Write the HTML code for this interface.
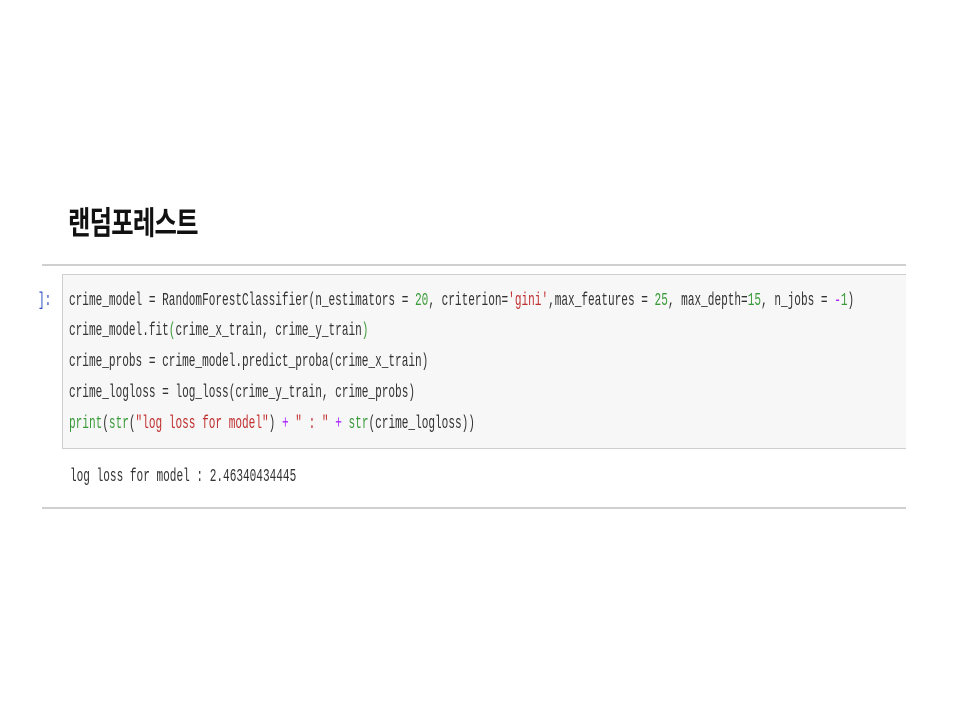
<!DOCTYPE html>
<html><head><meta charset="utf-8"><style>
body{margin:0;width:960px;height:720px;background:#fff;position:relative;overflow:hidden}
.t{position:absolute;left:68px;top:198px;font:bold 32px "Liberation Sans","Noto Sans CJK KR",sans-serif;color:#111;letter-spacing:-1px;transform:scaleX(0.76);transform-origin:0 50%}
.rule{position:absolute;left:42px;width:864px;height:2px;background:#d0d0d0}
.box{position:absolute;left:62px;top:274px;width:843px;height:173px;background:#f7f7f7;border:1px solid #cfcfcf;border-right:none}
.l{position:absolute;left:69px;font:18px "Liberation Mono",monospace;color:#333;white-space:pre;transform:scaleX(0.616);transform-origin:0 50%;line-height:20px}
.g{color:#3a9a3a}.r{color:#c03030}.p{color:#aa22ff}
.pr{position:absolute;left:38px;top:291px;font:18px "Liberation Mono",monospace;color:#3050c0;transform:scaleX(0.616);transform-origin:0 50%}
</style></head><body>
<div class="t">랜덤포레스트</div>
<div class="rule" style="top:264px"></div>
<div class="rule" style="top:507px"></div>
<div class="box"></div>
<div class="pr">]:</div>
<div class="l" style="top:291px">crime_model = RandomForestClassifier(n_estimators = <span class="g">20</span>, criterion=<span class="r">'gini'</span>,max_features = <span class="g">25</span>, max_depth=<span class="g">15</span>, n_jobs = <span class="p">-</span><span class="g">1</span>)</div>
<div class="l" style="top:321px">crime_model.fit<span class="g">(</span>crime_x_train, crime_y_train<span class="g">)</span></div>
<div class="l" style="top:352px">crime_probs = crime_model.predict_proba(crime_x_train)</div>
<div class="l" style="top:383px">crime_logloss = log_loss(crime_y_train, crime_probs)</div>
<div class="l" style="top:414px"><span class="g">print</span>(<span class="g">str</span>(<span class="r">"log loss for model"</span>) <span class="p">+</span> <span class="r">" : "</span> <span class="p">+</span> <span class="g">str</span>(crime_logloss))</div>
<div class="l" style="top:467px;left:70px">log loss for model : 2.46340434445</div>
</body></html>
